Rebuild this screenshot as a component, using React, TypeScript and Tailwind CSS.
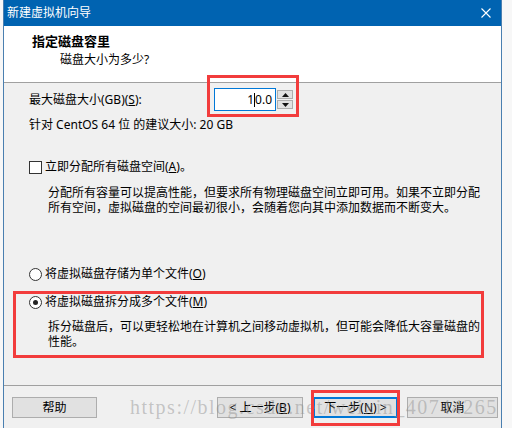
const Radio = ({ checked }: { checked?: boolean }) => (
  <span className="w-[13px] h-[13px] rounded-full border border-[#333] bg-white flex items-center justify-center shrink-0">
    {checked && <span className="w-[5px] h-[5px] rounded-full bg-[#222]" />}
  </span>
);

const Btn = ({ children, primary, w }: { children: React.ReactNode; primary?: boolean; w: string }) => (
  <div
    className={`${w} h-[21px] flex items-center justify-center bg-[#e1e1e1] text-[12px] ${
      primary ? "border-2 border-[#0078d7]" : "border border-[#adadad]"
    }`}
  >
    {children}
  </div>
);

const App = () => {
  return (
    <div
      className="relative w-[512px] h-[428px] overflow-hidden bg-[#f7f7f7] text-black"
      style={{ fontFamily: '"Noto Sans", "Noto Sans CJK SC", sans-serif' }}
    >
      <div className="ml-[3px] w-[499px] h-[440px] border-x border-[#4a7fb0] bg-[#f0f0f0] flex flex-col">
        {/* title bar */}
        <div className="h-[26px] bg-[#0063b1] text-white flex items-center justify-between pl-[3px] pr-[10px]">
          <span className="text-[12px] leading-[16px]">新建虚拟机向导</span>
          <svg width="10" height="10" viewBox="0 0 10 10">
            <path d="M0.5 0.5 L9.5 9.5 M9.5 0.5 L0.5 9.5" stroke="white" strokeWidth="1.1" />
          </svg>
        </div>

        {/* header */}
        <div className="h-[57px] bg-white border-b border-[#a0a0a0] pt-[6px]">
          <div className="pl-[28px] text-[13px] font-bold leading-[18px]">指定磁盘容里</div>
          <div className="pl-[56px] mt-[2px] text-[12px] leading-[16px]">磁盘大小为多少?</div>
        </div>

        {/* body */}
        <div className="text-[12px]">
          <div className="mt-[5px] h-[23px] flex items-center pl-[25px]">
            <span className="w-[185px] leading-[16px]">
              最大磁盘大小(GB)(<u>S</u>):
            </span>
            <div className="w-[62px] h-[23px] border border-[#0078d7] bg-white flex items-center justify-end pr-[3px] leading-[16px]">
              1<span className="inline-block w-px h-[14px] bg-black" />0.0
            </div>
            <div className="ml-px flex flex-col gap-[1px]">
              <div className="w-[16px] h-[9px] border border-[#adadad] bg-[#e1e1e1] flex items-center justify-center">
                <svg width="7" height="4" viewBox="0 0 7 4">
                  <path d="M3.5 0 L7 4 L0 4 Z" fill="#111" />
                </svg>
              </div>
              <div className="w-[16px] h-[9px] border border-[#adadad] bg-[#e1e1e1] flex items-center justify-center">
                <svg width="7" height="4" viewBox="0 0 7 4">
                  <path d="M0 0 L7 0 L3.5 4 Z" fill="#111" />
                </svg>
              </div>
            </div>
          </div>

          <div className="mt-[6px] h-[16px] leading-[16px] pl-[25px]">针对 CentOS 64 位 的建议大小: 20 GB</div>

          <div className="mt-[26px] h-[16px] flex items-center pl-[25px] gap-[3px]">
            <span className="w-[13px] h-[13px] border border-[#333] bg-white shrink-0" />
            <span className="leading-[16px]">
              立即分配所有磁盘空间(<u>A</u>)。
            </span>
          </div>
          <div className="mt-[10px] pl-[44px] leading-[15px]">
            分配所有容量可以提高性能，但要求所有物理磁盘空间立即可用。如果不立即分配
            <br />
            所有空间，虚拟磁盘的空间最初很小，会随着您向其中添加数据而不断变大。
          </div>

          <div className="mt-[51px] h-[16px] flex items-center pl-[25px] gap-[3px]">
            <Radio />
            <span className="leading-[16px]">
              将虚拟磁盘存储为单个文件(<u>O</u>)
            </span>
          </div>
          <div className="mt-[12px] h-[16px] flex items-center pl-[25px] gap-[3px]">
            <Radio checked />
            <span className="leading-[16px]">
              将虚拟磁盘拆分成多个文件(<u>M</u>)
            </span>
          </div>
          <div className="mt-[9px] pl-[44px] leading-[15px]">
            拆分磁盘后，可以更轻松地在计算机之间移动虚拟机，但可能会降低大容量磁盘的
            <br />
            性能。
          </div>
        </div>

        {/* footer */}
        <div className="mt-[36px] border-t border-[#a0a0a0]" />
        <div className="mt-[11px] flex pl-[8px]">
          <Btn w="w-[85px]">帮助</Btn>
          <div className="ml-[120px]">
            <Btn w="w-[86px]">
              &lt; 上一步(<u>B</u>)
            </Btn>
          </div>
          <div className="ml-[10px]">
            <Btn w="w-[85px]" primary>
              下一步(<u>N</u>) &gt;
            </Btn>
          </div>
          <div className="ml-[9px]">
            <Btn w="w-[91px]">取消</Btn>
          </div>
        </div>
      </div>

      {/* watermark */}
      <div
        className="absolute left-[130px] top-[396px] text-[20px] leading-[22px] tracking-[1.5px] text-[rgba(140,140,140,0.45)] whitespace-nowrap pointer-events-none"
        style={{ fontFamily: '"Liberation Serif", serif' }}
      >
        https://blog.csdn.net/weixin_40744265
      </div>

      {/* red annotation boxes */}
      <div className="absolute left-[207px] top-[75px] w-[92px] h-[42px] border-[3px] border-[#f23c3c] pointer-events-none" />
      <div className="absolute left-[13px] top-[291px] w-[471px] h-[67px] border-[3px] border-[#f23c3c] pointer-events-none" />
      <div className="absolute left-[311px] top-[390px] w-[89px] h-[36px] border-[3px] border-[#f23c3c] pointer-events-none" />
    </div>
  );
};

export default App;
